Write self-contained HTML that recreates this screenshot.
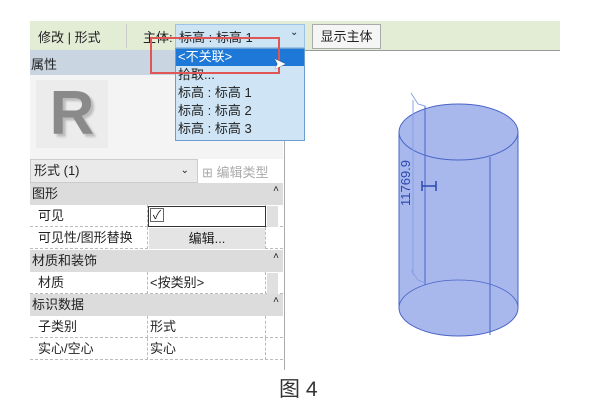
<!DOCTYPE html>
<html><head><meta charset="utf-8"><style>
body{margin:0;width:607px;height:413px;background:#fff;position:relative;overflow:hidden;font-family:"Liberation Sans","Noto Sans CJK SC",sans-serif;font-size:13px;color:#222}
.a{position:absolute}
.cat{position:absolute;left:30px;width:253px;background:#dcdcdc;height:22px;line-height:22px;padding-left:2px;box-sizing:border-box}
.cat:after{content:"˄";position:absolute;right:4px;top:-4px;font-size:10px}
.row{position:absolute;left:30px;width:253px;height:22px;line-height:22px;border-bottom:1px dashed #bbb;box-sizing:border-box;background:#fff}
.row .k{position:absolute;left:8px}
.row .v{position:absolute;left:120px}
.row:before{content:"";position:absolute;left:117px;top:0;height:22px;border-left:1px dashed #bbb}
.row:after{content:"";position:absolute;left:235px;top:0;height:22px;border-left:1px dashed #bbb}
</style></head><body>
<div class="a" style="left:30px;top:21px;width:530px;height:29px;background:#e3edd6;border-bottom:1px solid #999"></div>
<div class="a" style="left:38px;top:27px;font-size:13px">修改 | 形式</div>
<div class="a" style="left:126px;top:24px;height:24px;border-left:1px solid #ccc"></div>
<div class="a" style="left:143px;top:27px">主体:</div>
<div class="a" style="left:175px;top:24px;width:130px;height:24px;background:#cde4f5;border:1px solid #9cc3e5;box-sizing:border-box"></div>
<div class="a" style="left:179px;top:27px">标高 : 标高 1</div>
<div class="a" style="left:290px;top:27px;font-size:10px">⌄</div>
<div class="a" style="left:312px;top:24px;width:69px;height:25px;background:#f5f5f5;border:1px solid #aaa;box-sizing:border-box;text-align:center;line-height:23px">显示主体</div>
<div class="a" style="left:30px;top:50px;width:145px;height:25px;background:#c9d5e1"></div>
<div class="a" style="left:31px;top:54px">属性</div>
<div class="a" style="left:284px;top:50px;height:320px;border-left:1px solid #aaa"></div>
<div class="a" style="left:30px;top:75px;width:253px;height:84px;background:#f4f4f4"></div>
<div class="a" style="left:36px;top:80px;width:72px;height:68px;background:#ececec;font:bold 62px 'Liberation Sans',sans-serif;color:#8a8a8a;text-align:center;line-height:68px;text-shadow:3px 3px 2px #bbb">R</div>
<div class="a" style="left:30px;top:159px;width:168px;height:24px;background:#eaeaea;border:1px solid #ccc;box-sizing:border-box;line-height:22px;padding-left:3px">形式 (1)<span style="position:absolute;right:8px;font-size:10px">⌄</span></div>
<div class="a" style="left:202px;top:162px;color:#aaa">⊞ 编辑类型</div>
<div class="cat" style="top:183px">图形</div>
<div class="row" style="top:205px"><span class="k">可见</span></div>
<div class="a" style="left:148px;top:206px;width:118px;height:21px;border:1px solid #333;box-sizing:border-box;background:#fff"></div>
<div class="a" style="left:150px;top:208px;width:14px;height:14px;border:1px solid #666;box-sizing:border-box;font-size:12px;line-height:13px;text-align:center">✓</div>
<div class="row" style="top:227px"><span class="k">可见性/图形替换</span></div>
<div class="a" style="left:149px;top:228px;width:116px;height:21px;background:#e4e4e4;text-align:center;line-height:21px">编辑...</div>
<div class="cat" style="top:250px">材质和装饰</div>
<div class="row" style="top:272px"><span class="k">材质</span><span class="v">&lt;按类别&gt;</span></div>
<div class="cat" style="top:294px">标识数据</div>
<div class="row" style="top:316px"><span class="k">子类别</span><span class="v">形式</span></div>
<div class="row" style="top:338px"><span class="k">实心/空心</span><span class="v">实心</span></div>
<div class="a" style="left:267px;top:206px;width:11px;height:21px;background:#e0e0e0"></div>
<div class="a" style="left:267px;top:273px;width:11px;height:21px;background:#e0e0e0"></div>
<div class="a" style="left:175px;top:48px;width:130px;height:93px;background:#cfe5f6;border:1px solid #6a9fd0;box-sizing:border-box"></div>
<div class="a" style="left:176px;top:49px;width:128px;height:17px;background:#1e78d7"></div>
<div class="a" style="left:178px;top:48px;color:#fff;line-height:18px">&lt;不关联&gt;</div>
<div class="a" style="left:178px;top:66px;line-height:18px">拾取...<br>标高 : 标高 1<br>标高 : 标高 2<br>标高 : 标高 3</div>
<div class="a" style="left:150px;top:37px;width:130px;height:37px;border:2px solid #e05555;box-sizing:border-box"></div>
<div class="a" style="left:273px;top:54px;font-size:16px;color:#fff;text-shadow:0 0 1px #000">➤</div>
<svg class="a" style="left:0;top:0" width="607" height="413">
<path d="M399 132 L399 308 A59.5 28 0 0 0 518 308 L518 132 Z" fill="#a8b8ec" stroke="#4a64c8"/>
<ellipse cx="458.5" cy="132" rx="59.5" ry="28" fill="#a8b8ec" stroke="#4a64c8"/>
<path d="M399 308 A59.5 28 0 0 1 518 308" fill="none" stroke="#4a64c8" stroke-width="0.8"/>
<line x1="425" y1="106" x2="425" y2="285" stroke="#4a64c8"/>
<line x1="490" y1="157" x2="490" y2="335" stroke="#4a64c8"/>
<line x1="413" y1="100" x2="413" y2="275" stroke="#8aa0e8"/>
<path d="M411 93 L418 104 L425 106 M411 270 L418 280 L425 283" stroke="#8aa0e8" fill="none"/>
<path d="M422 186 H436 M422 181 V191 M436 181 V191" stroke="#2a48b0" stroke-width="1.5"/>
<text x="0" y="0" transform="translate(410,206) rotate(-90)" font-size="13" fill="#2a48b0" font-family="Liberation Sans">11769.9</text>
</svg>
<div class="a" style="left:279px;top:373px;font-size:21px;color:#333">图 4</div>
</body></html>
